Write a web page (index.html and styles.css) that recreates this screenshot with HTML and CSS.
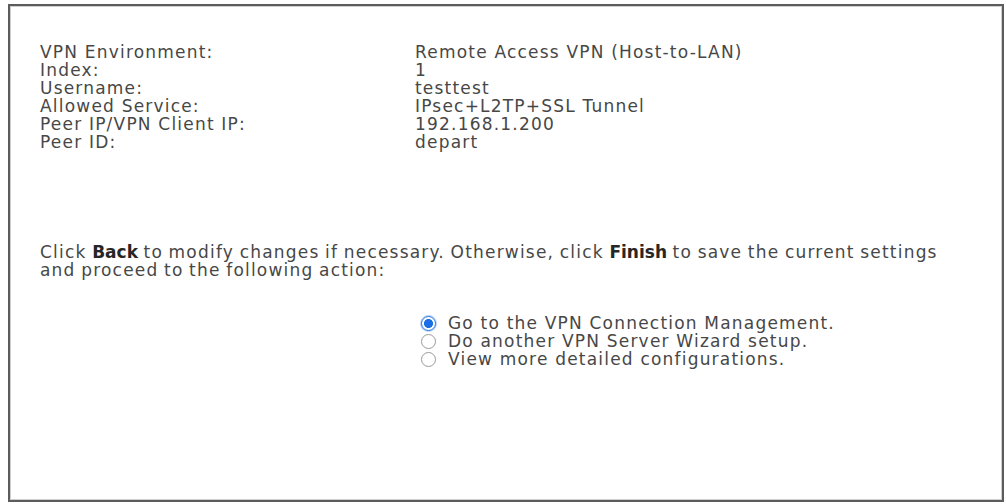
FILE: index.html
```html
<!DOCTYPE html>
<html>
<head>
<meta charset="utf-8">
<link rel="stylesheet" href="styles.css">
</head>
<body>
<div class="panel">
  <div class="summary">
    <div class="label">VPN Environment:</div><div class="value">Remote Access VPN (Host-to-LAN)</div>
    <div class="label">Index:</div><div class="value">1</div>
    <div class="label">Username:</div><div class="value">testtest</div>
    <div class="label">Allowed Service:</div><div class="value">IPsec+L2TP+SSL Tunnel</div>
    <div class="label">Peer IP/VPN Client IP:</div><div class="value">192.168.1.200</div>
    <div class="label">Peer ID:</div><div class="value">depart</div>
  </div>
  <p class="note">Click <b>Back</b> to modify changes if necessary. Otherwise, click <b>Finish</b> to save the current settings and proceed to the following action:</p>
  <div class="options">
    <label class="option"><input type="radio" name="next" checked><span>Go to the VPN Connection Management.</span></label>
    <label class="option"><input type="radio" name="next"><span>Do another VPN Server Wizard setup.</span></label>
    <label class="option"><input type="radio" name="next"><span>View more detailed configurations.</span></label>
  </div>
</div>
</body>
</html>
```
FILE: styles.css
```css
html, body {
  margin: 0;
  padding: 0;
  background: #ffffff;
}
body {
  padding: 4px 2px 2px 8px;
  font-family: "DejaVu Sans", Verdana, sans-serif;
  font-size: 17px;
  letter-spacing: 1.2px;
  color: #474747;
  line-height: 18px;
}
.panel {
  box-sizing: border-box;
  height: 498px;
  border: 2px solid #5c5c5c;
  box-shadow: inset 0 0 0 1px #cfcfcf;
  padding: 37px 42px 0 30px;
}
.summary {
  display: grid;
  grid-template-columns: 375px auto;
}
.note {
  margin: 92px 0 0 0;
  word-spacing: -1px;
}
.note b {
  color: #262626;
  font-weight: bold;
  letter-spacing: 0;
}
.options {
  margin: 35px 0 0 381px;
  display: flex;
  flex-direction: column;
}
.option {
  display: flex;
  align-items: center;
  height: 18px;
}
.option input {
  appearance: none;
  -webkit-appearance: none;
  box-sizing: border-box;
  margin: 0 12px 0 0;
  width: 15px;
  height: 15px;
  border: 1px solid #9a9a9a;
  border-radius: 50%;
  background: #fff;
  flex: none;
}
.option input:checked {
  border: 1px solid #1a6fe6;
  background: radial-gradient(circle, #1a6fe6 0 4.2px, #ffffff 4.8px);
  box-shadow: 0 0 0 1px #bcd3f5;
}
```
